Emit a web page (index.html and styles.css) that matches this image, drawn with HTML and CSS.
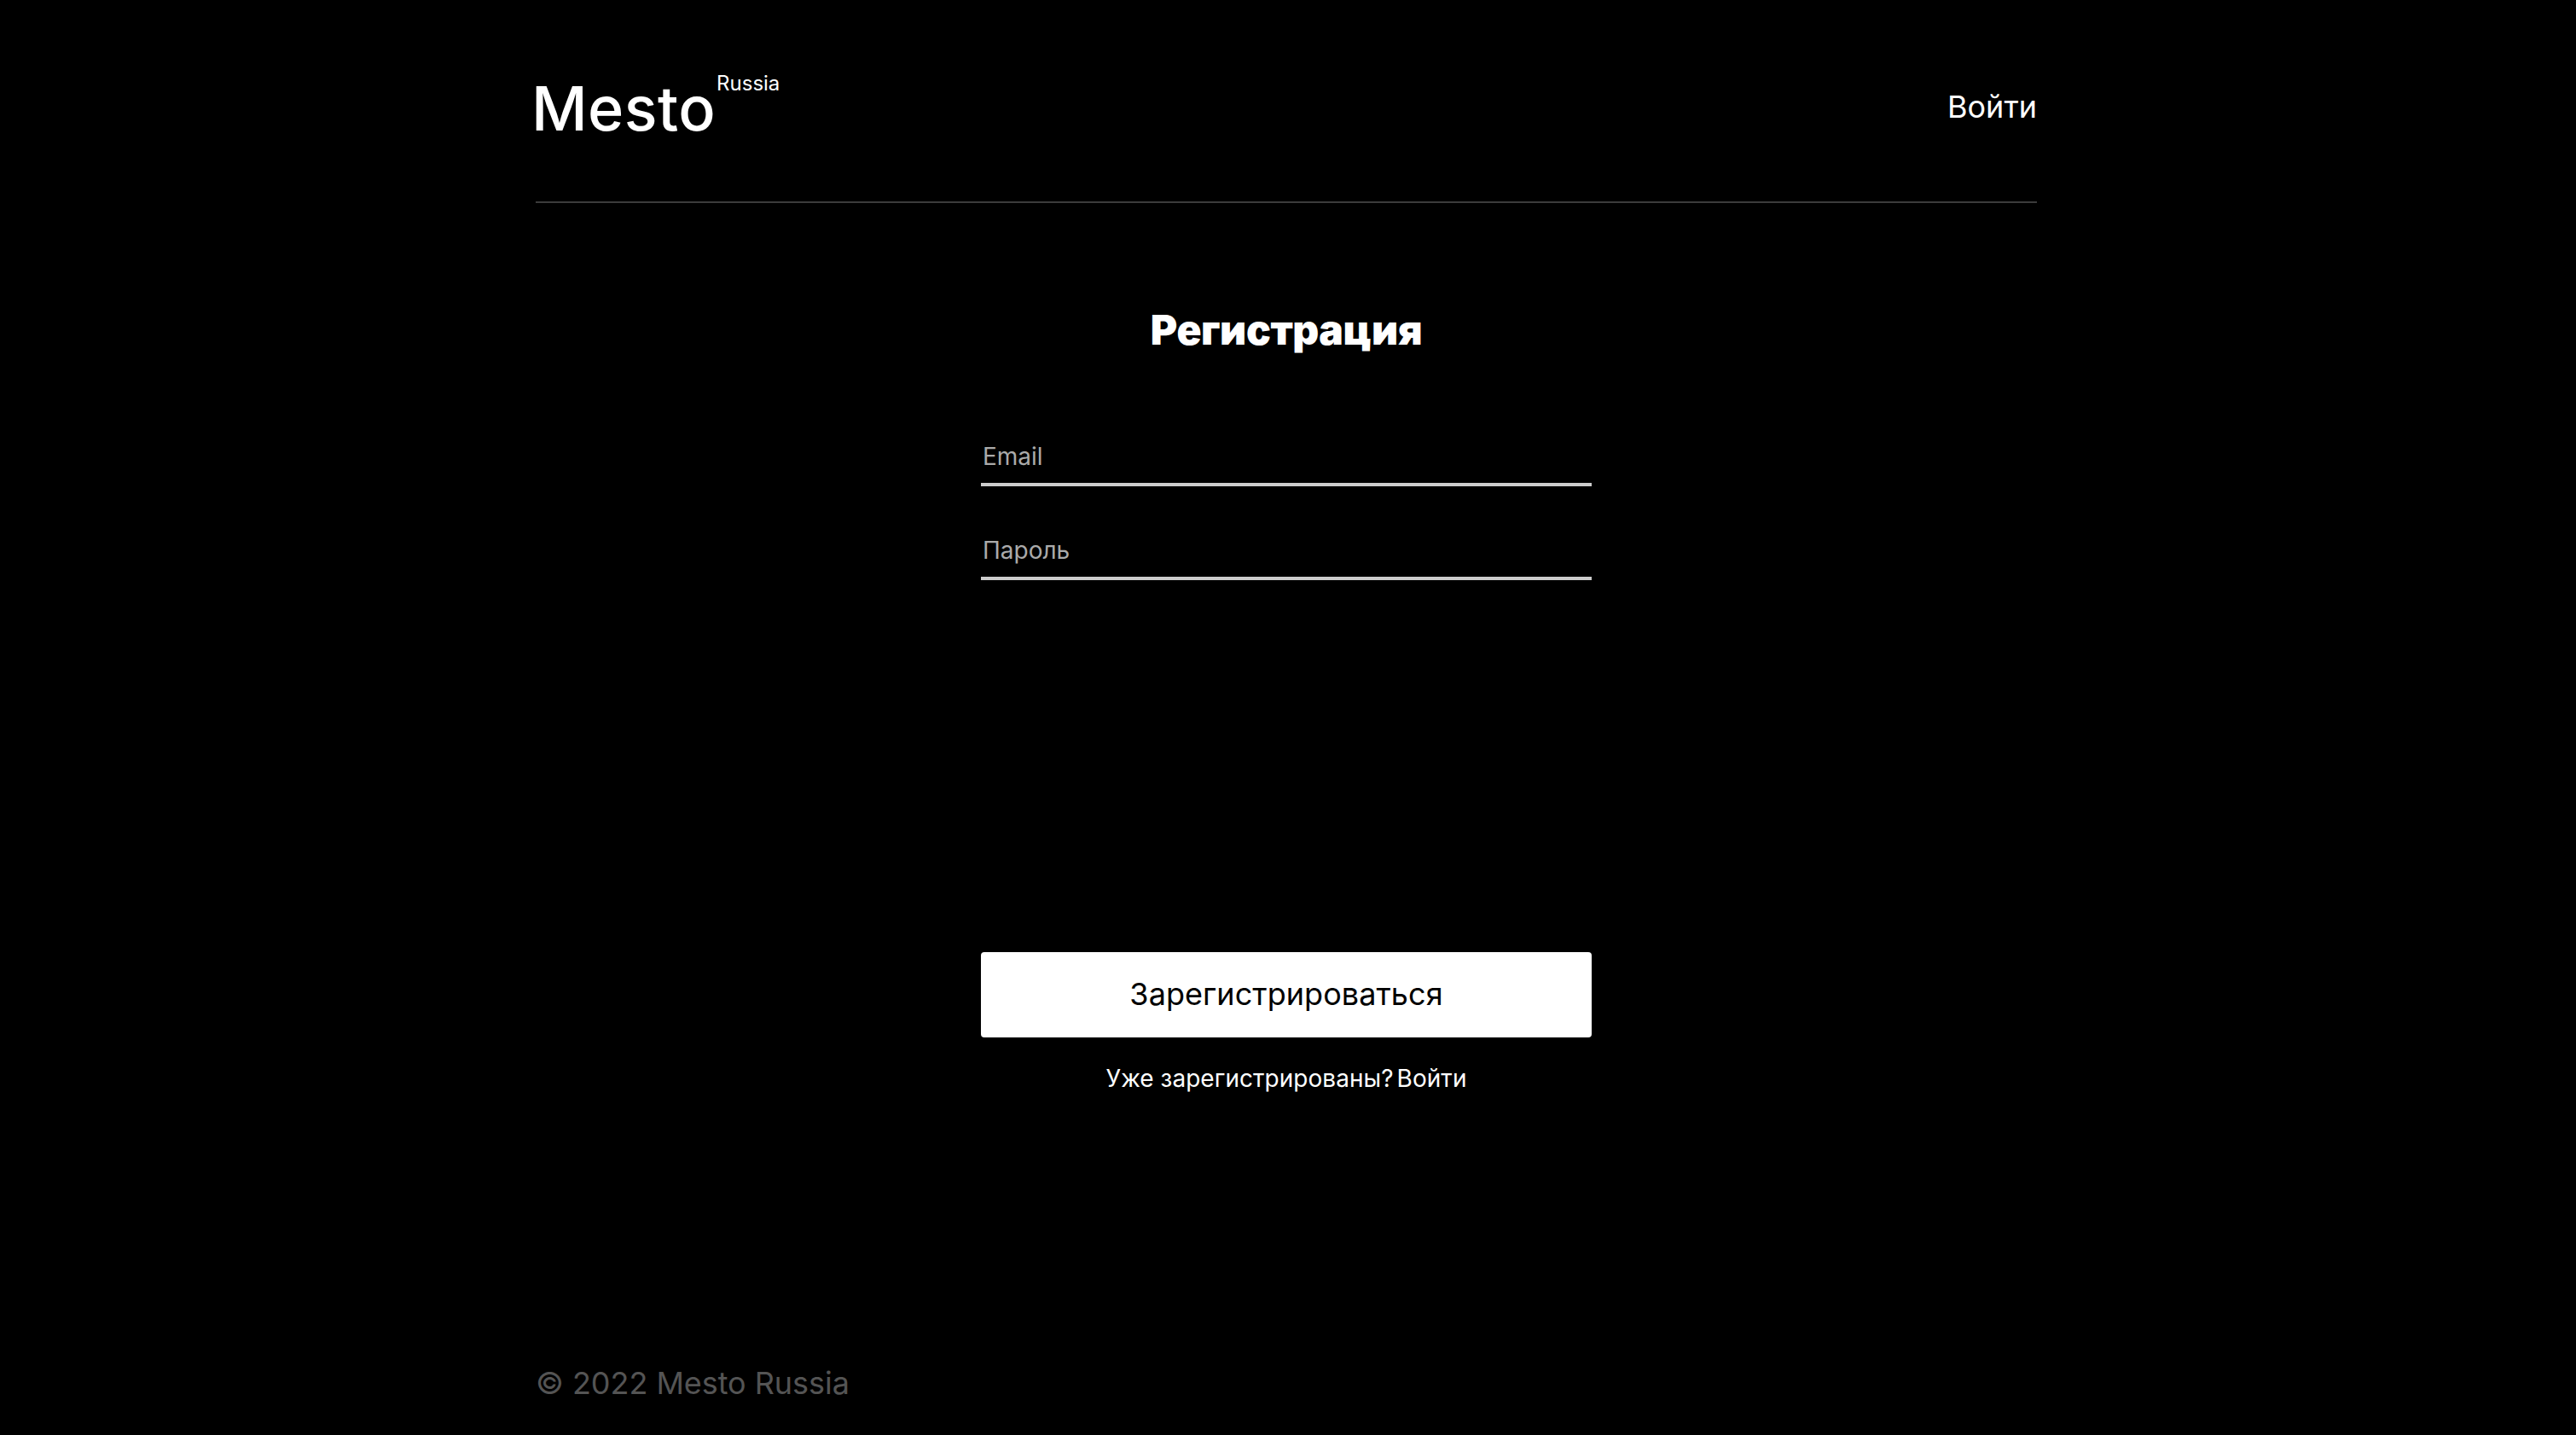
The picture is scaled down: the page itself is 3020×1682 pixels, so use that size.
FILE: index.html
```html
<!DOCTYPE html>
<html lang="ru">
<head>
  <meta charset="UTF-8">
  <title>Mesto</title>
  <link rel="stylesheet" href="styles.css">
</head>
<body>
  <div class="page">
    <header class="header">
      <div class="header__logo">Mesto<span class="header__region">Russia</span></div>
      <a class="header__link" href="#">Войти</a>
    </header>
    <main class="auth">
      <h1 class="auth__title">Регистрация</h1>
      <form class="auth__form">
        <input class="auth__input" type="email" name="email" placeholder="Email" required>
        <input class="auth__input" type="password" name="password" placeholder="Пароль" required>
        <button class="auth__button" type="submit">Зарегистрироваться</button>
      </form>
      <p class="auth__text">Уже зарегистрированы?<a class="auth__link" href="#">Войти</a></p>
    </main>
    <footer class="footer">
      <p class="footer__copyright">© 2022 Mesto Russia</p>
    </footer>
  </div>
</body>
</html>
```
FILE: styles.css
```css
body {
  margin: 0;
  background-color: #000;
  color: #fff;
  font-family: Inter, Arial, sans-serif;
}

.page {
  width: 1760px;
  height: 1682px;
  margin: 0 auto;
  padding-right: 4px;
  display: flex;
  flex-direction: column;
}

.header {
  box-sizing: border-box;
  height: 238px;
  padding-top: 85px;
  display: flex;
  justify-content: space-between;
  border-bottom: 2px solid rgba(84, 84, 84, .7);
}

.header__logo {
  display: flex;
  margin-left: -5px;
  font-size: 72px;
  line-height: 84px;
  font-weight: 500;
  letter-spacing: .4px;
}

.header__region {
  margin-left: 1px;
  margin-top: -2px;
  font-size: 24px;
  line-height: 30px;
  font-weight: 400;
  letter-spacing: 0;
}

.header__link {
  margin-top: 18px;
  color: #fff;
  font-size: 36px;
  line-height: 44px;
  text-decoration: none;
}

.auth {
  width: 716px;
  margin: 120px auto 0;
}

.auth__title {
  margin: 0;
  font-size: 48px;
  line-height: 58px;
  font-weight: 900;
  letter-spacing: -.4px;
  text-align: center;
}

.auth__form {
  margin-top: 94px;
  display: flex;
  flex-direction: column;
}

.auth__input {
  box-sizing: border-box;
  height: 60px;
  margin-bottom: 50px;
  padding: 0 2px 6px;
  border: 0;
  border-bottom: 4px solid #ccc;
  background-color: transparent;
  color: #fff;
  font-family: inherit;
  font-size: 28px;
}

.auth__input::placeholder {
  color: #aaa;
}

.auth__button {
  height: 100px;
  margin-top: 386px;
  padding-bottom: 4px;
  border: 0;
  border-radius: 4px;
  background-color: #fff;
  color: #000;
  font-family: inherit;
  font-size: 36px;
  letter-spacing: .05px;
}

.auth__text {
  margin: 31px 0 0;
  font-size: 28px;
  line-height: 34px;
  letter-spacing: .04px;
  text-align: center;
}

.auth__link {
  margin-left: 4px;
  color: #fff;
  text-decoration: none;
}

.footer {
  margin-top: auto;
  padding-bottom: 39px;
}

.footer__copyright {
  margin: 0;
  color: #545454;
  font-size: 36px;
  line-height: 44px;
  letter-spacing: -.05px;
}
```
